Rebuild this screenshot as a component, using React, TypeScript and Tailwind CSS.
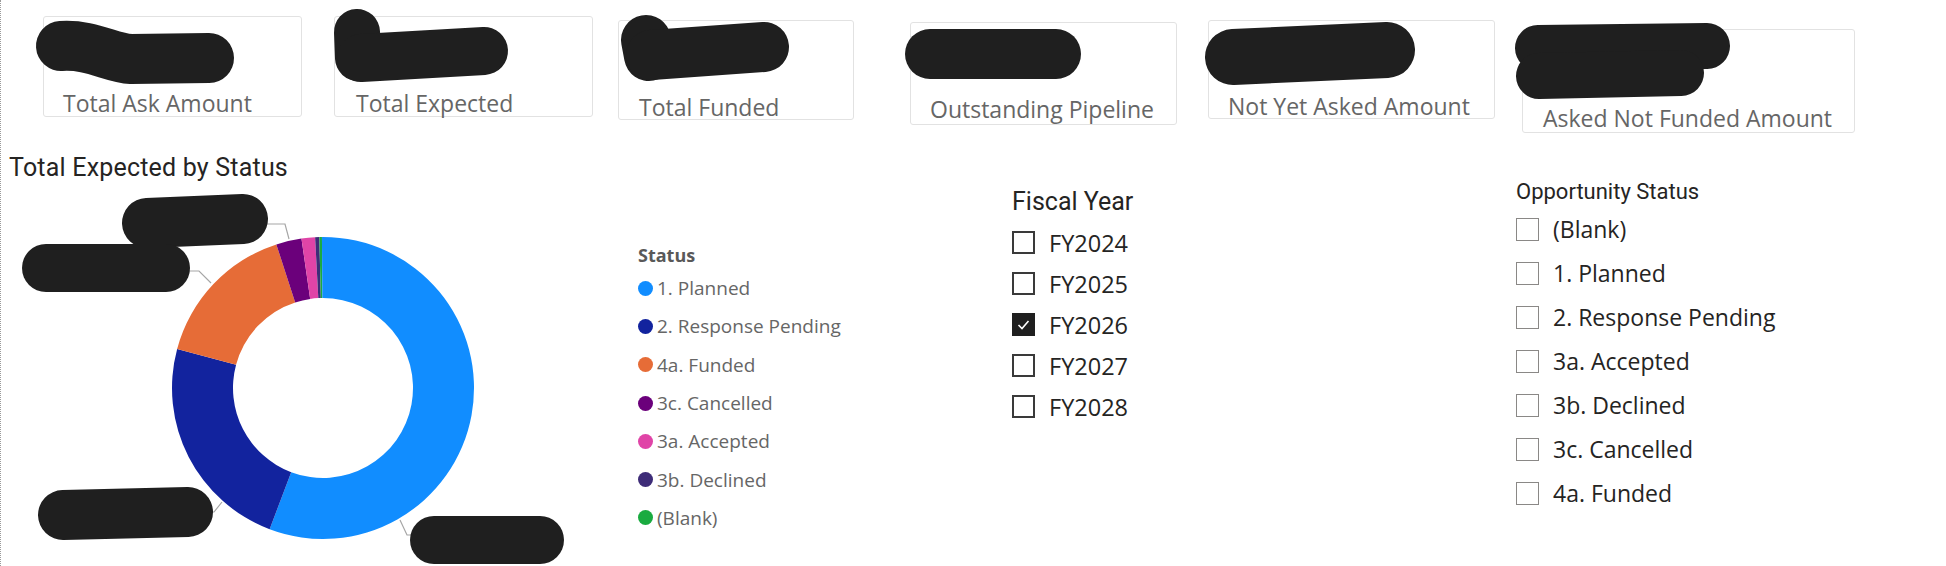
import React from "react";

const CX = 323;
const CY = 388;
const RO = 151;
const RI = 90;

function pt(deg: number, r: number): [number, number] {
  const a = (deg * Math.PI) / 180;
  return [CX + r * Math.sin(a), CY - r * Math.cos(a)];
}

function arc(a0: number, a1: number) {
  const large = a1 - a0 > 180 ? 1 : 0;
  const [x0, y0] = pt(a0, RO);
  const [x1, y1] = pt(a1, RO);
  const [x2, y2] = pt(a1, RI);
  const [x3, y3] = pt(a0, RI);
  return `M${x0} ${y0} A${RO} ${RO} 0 ${large} 1 ${x1} ${y1} L${x2} ${y2} A${RI} ${RI} 0 ${large} 0 ${x3} ${y3} Z`;
}

const segments = [
  { a0: 0, a1: 200.7, c: "#118DFF" },
  { a0: 200.7, a1: 285, c: "#12239E" },
  { a0: 285, a1: 342, c: "#E66C37" },
  { a0: 342, a1: 351.8, c: "#6B007B" },
  { a0: 351.8, a1: 357, c: "#E044A7" },
  { a0: 357, a1: 358.6, c: "#3E2C78" },
  { a0: 358.6, a1: 359.6, c: "#1AAB40" },
  { a0: 359.6, a1: 360, c: "#118DFF" },
];

const legend = [
  { label: "1. Planned", c: "#118DFF" },
  { label: "2. Response Pending", c: "#12239E" },
  { label: "4a. Funded", c: "#E66C37" },
  { label: "3c. Cancelled", c: "#6B007B" },
  { label: "3a. Accepted", c: "#E044A7" },
  { label: "3b. Declined", c: "#3E2C78" },
  { label: "(Blank)", c: "#1AAB40" },
];

const fiscal = [
  { label: "FY2024", checked: false },
  { label: "FY2025", checked: false },
  { label: "FY2026", checked: true },
  { label: "FY2027", checked: false },
  { label: "FY2028", checked: false },
];

const statuses = [
  "(Blank)",
  "1. Planned",
  "2. Response Pending",
  "3a. Accepted",
  "3b. Declined",
  "3c. Cancelled",
  "4a. Funded",
];

const sans = "font-['Open_Sans','Noto_Sans',sans-serif]";
const din = "font-['Roboto','Noto_Sans',sans-serif]";

function Card({
  label,
  cls,
  pb,
}: {
  label: string;
  cls: string;
  pb: string;
}) {
  return (
    <div
      className={`flex flex-col justify-end rounded-[3px] border border-[#e2e2e2] bg-white pl-[19px] ${cls} ${pb}`}
    >
      <div className={`${sans} text-[23px] leading-[24px] text-[#666666] whitespace-nowrap`}>
        {label}
      </div>
    </div>
  );
}

function Box({ checked, dark }: { checked: boolean; dark: boolean }) {
  if (checked) {
    return (
      <div className="flex h-[23px] w-[23px] items-center justify-center bg-[#1f1f1f]">
        <svg width="23" height="23" viewBox="0 0 23 23">
          <polyline
            points="6.5,12 10,15.5 16.5,8"
            fill="none"
            stroke="#ffffff"
            strokeWidth="1.6"
          />
        </svg>
      </div>
    );
  }
  return (
    <div
      className={`h-[23px] w-[23px] bg-white ${
        dark ? "border-2 border-[#3a3a3a]" : "border-[1.5px] border-[#8a8886]"
      }`}
    />
  );
}

export default function App() {
  return (
    <div className="relative h-[566px] w-[1946px] overflow-hidden border-l border-dotted border-[#9a9a9a] bg-white">
      {/* KPI cards */}
      <div className="flex items-start pl-[42px]">
        <Card label="Total Ask Amount" cls="mt-[16px] h-[101px] w-[259px]" pb="pb-[1px]" />
        <Card label="Total Expected" cls="ml-[32px] mt-[16px] h-[101px] w-[259px] pl-[21px]" pb="pb-[1px]" />
        <Card label="Total Funded" cls="ml-[25px] mt-[20px] h-[100px] w-[236px] pl-[20px]" pb="pb-[0px]" />
        <Card label="Outstanding Pipeline" cls="ml-[56px] mt-[22px] h-[103px] w-[267px]" pb="pb-[3px]" />
        <Card label="Not Yet Asked Amount" cls="ml-[31px] mt-[20px] h-[99px] w-[287px] pl-[18px]" pb="pb-[0px]" />
        <Card label="Asked Not Funded Amount" cls="ml-[27px] mt-[29px] h-[104px] w-[333px] pl-[20px]" pb="pb-[2px]" />
      </div>

      {/* Lower section */}
      <div className="flex items-start">
        {/* Donut chart visual */}
        <div className="w-[600px]">
          <div className={`${din} mt-[20px] pl-[8px] text-[25px] leading-[30px] tracking-[0.2px] text-[#252423]`}>
            Total Expected by Status
          </div>
          <svg width="600" height="383" viewBox="1 183 600 383" className="block">
            {segments.map((s, i) => (
              <path key={i} d={arc(s.a0, s.a1)} fill={s.c} />
            ))}
            <g fill="none" stroke="#a6a6a6" strokeWidth="1.2">
              <polyline points="262,224 285,224 289,239" />
              <polyline points="185,271 199,271 211,283" />
              <polyline points="208,512 214,512 222,502" />
              <polyline points="400,520 407,535 414,535" />
            </g>
          </svg>
        </div>

        {/* Legend */}
        <div className={`${sans} ml-[37px] mt-[110px] w-[374px]`}>
          <div className="h-[24px] text-[18px] font-bold leading-[24px] text-[#595959]">Status</div>
          <div className="mt-[2px] flex flex-col">
            {legend.map((l) => (
              <div key={l.label} className="flex h-[38.3px] items-center">
                <span
                  className="h-[15px] w-[15px] shrink-0 rounded-full"
                  style={{ backgroundColor: l.c }}
                />
                <span className="ml-[4px] whitespace-nowrap text-[19px] leading-[24px] text-[#666666]">
                  {l.label}
                </span>
              </div>
            ))}
          </div>
        </div>

        {/* Fiscal Year slicer */}
        <div className="mt-[54px] w-[504px]">
          <div className={`${din} h-[30px] text-[25px] leading-[30px] text-[#252423]`}>Fiscal Year</div>
          <div className="mt-[5px] flex flex-col">
            {fiscal.map((f) => (
              <div key={f.label} className="flex h-[41px] items-center">
                <Box checked={f.checked} dark={true} />
                <span className={`${sans} ml-[14px] text-[23.5px] leading-[28px] text-[#252423]`}>
                  {f.label}
                </span>
              </div>
            ))}
          </div>
        </div>

        {/* Opportunity Status slicer */}
        <div className="mt-[45px]">
          <div className={`${din} h-[28px] text-[22px] leading-[28px] text-[#252423]`}>
            Opportunity Status
          </div>
          <div className="mt-[1px] flex flex-col">
            {statuses.map((s) => (
              <div key={s} className="flex h-[44px] items-center">
                <Box checked={false} dark={false} />
                <span className={`${sans} ml-[14px] whitespace-nowrap text-[23px] leading-[28px] text-[#252423]`}>
                  {s}
                </span>
              </div>
            ))}
          </div>
        </div>
      </div>

      {/* Redaction marks drawn over the values and data labels */}
      <svg
        className="pointer-events-none absolute left-0 top-0"
        width="1946"
        height="566"
        viewBox="0 0 1946 566"
      >
        <g fill="none" stroke="#1f1f1f" strokeLinecap="round" strokeLinejoin="round">
          <path d="M60 46 C 90 44, 110 58, 130 59 L 208 58" strokeWidth="50" />
          <path d="M356 32 L 357 58" strokeWidth="46" />
          <path d="M360 58 L 483 51" strokeWidth="48" />
          <path d="M645 40 L 648 56" strokeWidth="50" />
          <path d="M650 55 L 763 47" strokeWidth="50" />
          <path d="M929 54 L 1055 54" strokeWidth="50" />
          <path d="M1232 57 L 1386 50" strokeWidth="56" />
          <path d="M1537 48 L 1706 46" strokeWidth="46" />
          <path d="M1538 76 L 1680 73" strokeWidth="46" />
          <path d="M146 223 L 242 219" strokeWidth="50" />
          <path d="M45 268 L 165 268" strokeWidth="48" />
          <path d="M62 515 L 187 512" strokeWidth="50" />
          <path d="M433 540 L 539 540" strokeWidth="48" />
        </g>
      </svg>
    </div>
  );
}
